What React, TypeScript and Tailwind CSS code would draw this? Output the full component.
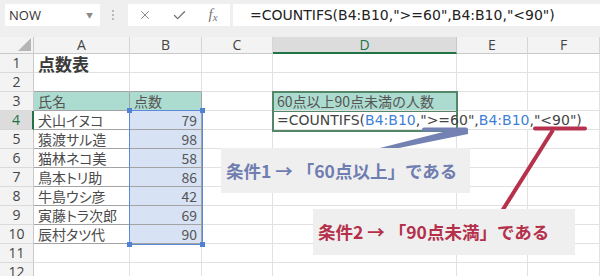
import React from "react";
import { X, Check } from "lucide-react";

const names = ["犬山イヌコ", "猿渡サル造", "猫林ネコ美", "鳥本トリ助", "牛島ウシ彦", "寅藤トラ次郎", "辰村タツ代"];
const scores = [79, 98, 58, 86, 42, 69, 90];

const cjk = "font-['Noto_Sans_CJK_JP','Noto_Sans',sans-serif]";

function RowHead({ n }: { n: number }) {
  const active = n === 4;
  return (
    <div
      className={
        active
          ? "flex h-full w-[34px] shrink-0 items-center justify-center border-b border-r-2 border-b-[#d6d6d6] border-r-[#217346] bg-[#dcdcdc] text-[14px] leading-none text-[#217346] font-['Open_Sans',sans-serif]"
          : "flex h-full w-[34px] shrink-0 items-center justify-center border-b border-r border-b-[#dadada] border-r-[#c9c9c9] bg-[#f3f3f3] text-[14px] leading-none text-[#444] font-['Open_Sans',sans-serif]"
      }
    >
      {n}
    </div>
  );
}

function Cell({ w, cls, children }: { w: string; cls?: string; children?: React.ReactNode }) {
  return (
    <div className={`${w} relative flex h-full shrink-0 items-center whitespace-nowrap border-b border-r leading-none ${cls ?? "border-[#e1e1e1]"}`}>
      {children}
    </div>
  );
}

export default function App() {
  const rows = Array.from({ length: 12 }, (_, i) => i + 1);
  return (
    <div className={`relative h-[276px] w-[600px] overflow-hidden bg-white ${cjk}`}>
      {/* toolbar */}
      <div className="flex h-[37px] items-start bg-[#efefef] pt-[4px]">
        <div className="ml-[5px] flex h-[22px] w-[95px] items-center justify-between bg-white pl-[4px] pr-[7px]">
          <span className="text-[13px] leading-none text-[#333] font-['Open_Sans',sans-serif]">NOW</span>
          <span className="text-[7px] leading-none text-[#8a8a8a]">▼</span>
        </div>
        <div className="ml-[12px] flex h-[22px] w-[2px] flex-col items-center justify-center gap-[2px]">
          <span className="h-[2px] w-[2px] bg-[#b8b8b8]" />
          <span className="h-[2px] w-[2px] bg-[#b8b8b8]" />
          <span className="h-[2px] w-[2px] bg-[#b8b8b8]" />
        </div>
        <div className="ml-[14px] flex h-[22px] w-[102px] items-center bg-white">
          <span className="flex w-[34px] justify-center text-[#707070]">
            <X size={14} strokeWidth={1.4} />
          </span>
          <span className="flex w-[34px] justify-center text-[#707070]">
            <Check size={15} strokeWidth={2} />
          </span>
          <span className="flex w-[34px] justify-center text-[15px] italic leading-none text-[#777] font-['Liberation_Serif',serif]">
            f<span className="mt-[5px] text-[11px] leading-none">x</span>
          </span>
        </div>
        <div className="ml-[3px] flex h-[22px] flex-1 items-center bg-white pl-[17px] text-[14px] leading-none text-[#222] font-['DejaVu_Sans',sans-serif]">
          =COUNTIFS(B4:B10,"&gt;=60",B4:B10,"&lt;90")
        </div>
      </div>

      {/* column header */}
      <div className="flex h-[17px] text-[14px] leading-none text-[#444] font-['Open_Sans',sans-serif]">
        <div className="relative h-full w-[34px] shrink-0 border-b border-r border-[#c9c9c9] bg-[#f3f3f3]">
          <div className="absolute bottom-[2px] right-[2px] h-0 w-0 border-b-[13px] border-l-[13px] border-b-[#b5b5b5] border-l-transparent" />
        </div>
        <div className="flex h-full w-[96px] shrink-0 items-center justify-center border-b border-r border-b-[#c9c9c9] border-r-[#d6d6d6] bg-[#f3f3f3]">A</div>
        <div className="flex h-full w-[72px] shrink-0 items-center justify-center border-b border-r border-b-[#c9c9c9] border-r-[#d6d6d6] bg-[#f3f3f3]">B</div>
        <div className="flex h-full w-[71px] shrink-0 items-center justify-center border-b border-r border-b-[#c9c9c9] border-r-[#d6d6d6] bg-[#f3f3f3]">C</div>
        <div className="flex h-full w-[184px] shrink-0 items-center justify-center border-b-2 border-r border-b-[#217346] border-r-[#c9c9c9] bg-[#dcdcdc] text-[#217346]">D</div>
        <div className="flex h-full w-[71px] shrink-0 items-center justify-center border-b border-r border-b-[#c9c9c9] border-r-[#d6d6d6] bg-[#f3f3f3]">E</div>
        <div className="flex h-full w-[72px] shrink-0 items-center justify-center border-b border-r border-b-[#c9c9c9] border-r-[#d6d6d6] bg-[#f3f3f3]">F</div>
      </div>

      {rows.map((r) => {
        const isTable = r >= 3 && r <= 10;
        const isData = r >= 4 && r <= 10;
        return (
          <div key={r} className="flex h-[19px] text-[14px] text-[#444]">
            <RowHead n={r} />
            {/* A */}
            <Cell
              w="w-[96px]"
              cls={
                r === 3
                  ? "border-[#a3a3a3] bg-[#acdccf]"
                  : isTable
                  ? "border-b-[#a3a3a3] border-r-[#a3a3a3]"
                  : r === 2
                  ? "border-b-[#a3a3a3] border-r-[#e1e1e1]"
                  : "border-[#e1e1e1]"
              }
            >
              {r === 1 && <span className="pl-[4px] text-[17px] font-bold text-[#3a3a3a]">点数表</span>}
              {r === 3 && <span className="pl-[4px] text-[#555]">氏名</span>}
              {isData && <span className="pl-[4px] text-[#4a4a4a] [font-feature-settings:'palt']">{names[r - 4]}</span>}
            </Cell>
            {/* B */}
            <Cell
              w="w-[72px]"
              cls={
                r === 3
                  ? "border-[#a3a3a3] bg-[#acdccf]"
                  : isData
                  ? "border-[#a3a3a3] bg-[#d7e2f4] justify-end"
                  : r === 2
                  ? "border-b-[#a3a3a3] border-r-[#e1e1e1]"
                  : "border-[#e1e1e1]"
              }
            >
              {r === 3 && <span className="pl-[4px] text-[#555]">点数</span>}
              {isData && <span className="pr-[4px] text-[#555]">{scores[r - 4]}</span>}
            </Cell>
            {/* C */}
            <Cell w="w-[71px]" />
            {/* D */}
            <Cell w="w-[184px]" cls={r === 3 ? "border-[#e1e1e1] bg-[#acdccf]" : "border-[#e1e1e1]"}>
              {r === 3 && <span className="pl-[4px] text-[#555]">60点以上90点未満の人数</span>}
              {r === 4 && (
                <span className="absolute left-[4px] top-1/2 z-10 -translate-y-1/2 text-[14px] text-[#444] font-['DejaVu_Sans',sans-serif]">
                  =COUNTIFS(<span className="text-[#3f7fd6]">B4:B10</span>,"&gt;=60",<span className="text-[#3f7fd6]">B4:B10</span>,"&lt;90")
                </span>
              )}
            </Cell>
            {/* E */}
            <Cell w="w-[71px]" cls={r === 4 ? "border-b-[#e1e1e1] border-r-transparent" : "border-[#e1e1e1]"} />
            {/* F */}
            <Cell w="w-[72px]" />
          </div>
        );
      })}

      {/* selection B4:B10 */}
      <div className="pointer-events-none absolute left-[129px] top-[110px] h-[135px] w-[74px] border border-[#5b8bd8]">
        <span className="absolute -left-[3px] -top-[3px] h-[5px] w-[5px] bg-[#4f82d6]" />
        <span className="absolute -right-[3px] -top-[3px] h-[5px] w-[5px] bg-[#4f82d6]" />
        <span className="absolute -bottom-[3px] -left-[3px] h-[5px] w-[5px] bg-[#4f82d6]" />
        <span className="absolute -bottom-[3px] -right-[3px] h-[5px] w-[5px] bg-[#4f82d6]" />
      </div>

      {/* D3:D4 border */}
      <div className="pointer-events-none absolute left-[272px] top-[91px] h-[41px] w-[186px] border-2 border-[#54876a]">
        <div className="absolute left-0 right-0 top-[18px] h-[1px] bg-[#54876a]" />
      </div>

      {/* annotations */}
      <svg className="pointer-events-none absolute left-0 top-0" width="600" height="276">
        <polygon points="376,149 455,129 468,130 468,134 394,149" fill="#7382b3" />
        <line x1="424" y1="129.5" x2="466" y2="129.5" stroke="#7382b3" strokeWidth="4" strokeLinecap="round" />
        <line x1="553" y1="130" x2="502" y2="211" stroke="#b6314c" strokeWidth="4" />
        <line x1="535" y1="128.5" x2="585" y2="128.5" stroke="#b6314c" strokeWidth="4" strokeLinecap="round" />
      </svg>

      <div className="absolute left-[221px] top-[148px] flex h-[45px] w-[249px] items-center bg-[#efefef] pl-[5px] text-[17.5px] font-bold leading-none text-[#6f7db0]">
        条件1 → 「60点以上」である
      </div>
      <div className="absolute left-[313px] top-[209px] flex h-[46px] w-[262px] items-center bg-[#efefef] pl-[5px] text-[17.5px] font-bold leading-none text-[#b4304b]">
        条件2 → 「90点未満」である
      </div>
    </div>
  );
}
